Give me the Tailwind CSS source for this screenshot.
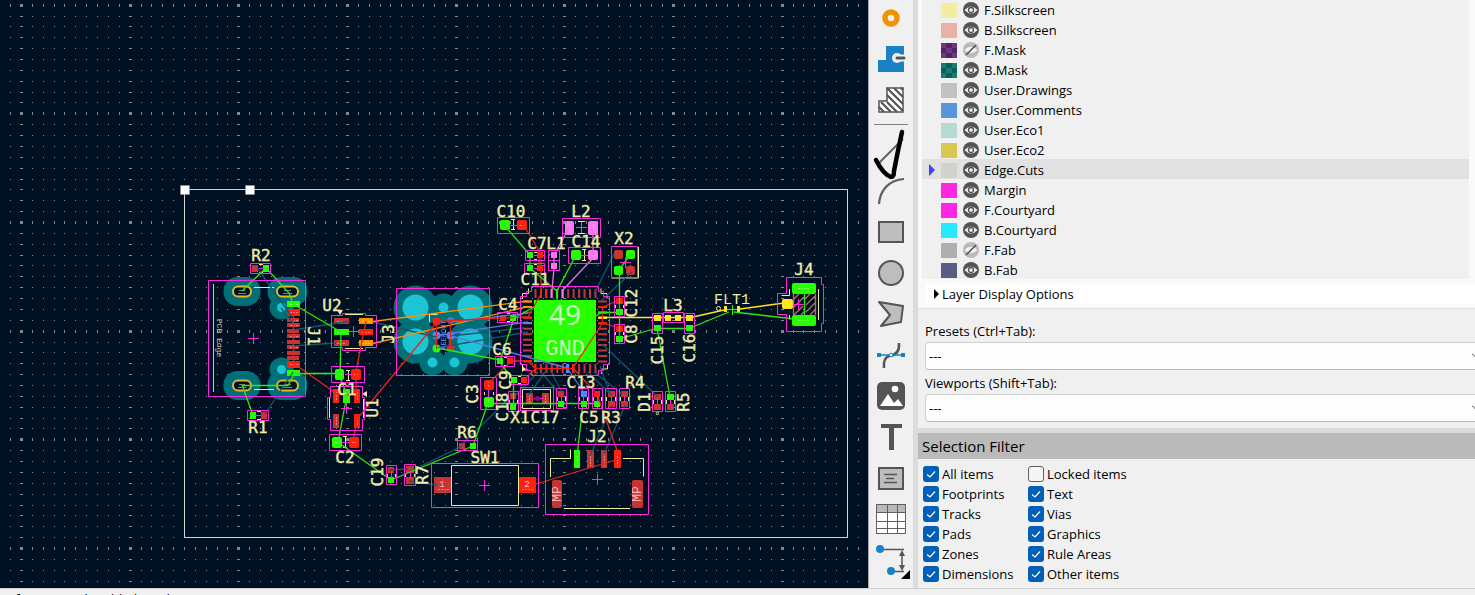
<!DOCTYPE html>
<html lang="en">
<head>
<meta charset="utf-8">
<title>PCB Editor</title>
<script src="https://cdn.jsdelivr.net/npm/@tailwindcss/browser@4"></script>
</head>
<body class="flex h-screen flex-col overflow-hidden bg-[#f0f0f0] font-['Open_Sans','Noto_Sans',sans-serif] text-[13px] leading-5 text-black">
<main class="flex min-h-0 flex-1">

<!-- Board canvas -->
<section aria-label="Board canvas" class="min-w-0 flex-1 overflow-hidden border-r border-[#a8a8a8] bg-[#001023]">
<svg width="1400" height="1000" class="block max-w-none" fill="none" font-family="'DejaVu Sans Mono',monospace">
  <path id="grid" fill="#858889" shape-rendering="crispEdges"/>
  <path stroke="#d0d4d2" d="M184.500 189.500h663v348h-663z"/>

  <!-- Copper clearance halos -->
  <g fill="#007078">
    <rect x="223.500" y="277" width="37" height="29" rx="14"/><rect x="267.500" y="277" width="40" height="29" rx="14"/>
    <rect x="223.500" y="371" width="37" height="29" rx="14"/><rect x="267.500" y="371" width="40" height="29" rx="14"/>
    <circle cx="281.500" cy="307.500" r="12"/><circle cx="281.500" cy="369.500" r="12"/>
    <circle cx="415.500" cy="307.500" r="22"/><circle cx="470.500" cy="307.500" r="22"/><circle cx="415.500" cy="341.500" r="22"/><circle cx="470.500" cy="341.500" r="22"/>
    <circle cx="443.500" cy="307.500" r="14"/><circle cx="432.500" cy="362.500" r="13"/><circle cx="454.500" cy="362.500" r="13"/>
  </g>
  <g fill="#1cc5d6">
    <circle cx="281.500" cy="307.500" r="4.500"/><circle cx="281.500" cy="369.500" r="4.500"/>
    <circle cx="415.500" cy="307.500" r="13"/><circle cx="470.500" cy="307.500" r="13"/><circle cx="415.500" cy="341.500" r="13"/><circle cx="470.500" cy="341.500" r="13"/>
    <circle cx="443.500" cy="307.500" r="5"/><circle cx="432.500" cy="362.500" r="5"/><circle cx="454.500" cy="362.500" r="5"/>
  </g>
  <g fill="#001023" stroke="#e8b52a" stroke-width="2">
    <rect x="233" y="286.500" width="18" height="10" rx="5"/><rect x="277" y="286.500" width="21" height="10" rx="5"/>
    <rect x="233" y="380.500" width="18" height="10" rx="5"/><rect x="277" y="380.500" width="21" height="10" rx="5"/>
  </g>
  <path stroke="#77808a" stroke-width="1" d="M239 290.500h6M238 293.500h8M284 290.500h7M283 293.500h9M239 384.500h6M238 387.500h8M284 384.500h7M283 387.500h9"/>

  <!-- Pads -->
  <g fill="#c83434">
    <path d="M287 318h12v4h-12zM287 323h13v4h-13zM287 329h12v4h-12zM287 334h13v4h-13zM287 340h13v4h-13zM287 345h12v4h-12zM287 351h13v4h-13zM287 356h12v4h-12z"/>
    <path d="M252 265h6v7h-6zM261 412h6v7h-6zM334 318h15v6h-15zM334 340h15v6h-15zM333 414h6v14h-6zM388 467h6v6h-6zM406 466h8v7h-8zM406 477h8v7h-8z"/>
    <path d="M510 393h6v6h-6zM526 393h7v11h-7zM542 393h7v11h-7zM558 391h6v6h-6zM608 391h7v6h-7zM608 401h7v6h-7zM621 391h7v6h-7zM621 401h7v6h-7zM654 394h7v6h-7zM654 404h7v6h-7zM667 404h7v6h-7zM459 443h6v6h-6z"/>
    <rect x="614" y="250" width="9" height="9" rx="2"/><rect x="626" y="266" width="9" height="9" rx="2"/>
    <rect x="434" y="477" width="17" height="16"/><path d="M587 450h7v18h-7zM601 450h6v18h-6z"/>
    <rect x="552" y="480" width="10" height="28" rx="2"/><rect x="632" y="480" width="11" height="28" rx="2"/>
    <circle cx="450.500" cy="348" r="4"/>
  </g>
  <g stroke="#c83434" stroke-width="9" stroke-dasharray="2 3.450">
    <path d="M527.500 300.500v62M602.500 300.500v62M534.500 293.500h62M534.500 368.500h62"/>
  </g>
  <g fill="#26ff00">
    <path d="M287 301h13v6h-13zM287 370h13v6h-13zM263 265h6v7h-6zM250 412h6v7h-6zM334 329h15v6h-15zM343 389h7v14h-7zM388 477h6v6h-6z"/>
    <rect x="335" y="369" width="9" height="11" rx="2"/><rect x="332" y="437" width="10" height="11" rx="2"/><rect x="500" y="220" width="10" height="10" rx="2"/><rect x="571" y="250" width="10" height="10" rx="2"/><rect x="626" y="250" width="9" height="9" rx="2"/><rect x="614" y="266" width="9" height="9" rx="2"/><rect x="484" y="397" width="10" height="10" rx="2"/>
    <path d="M527 252h6v6h-6zM527 265h6v6h-6zM616 309h7v6h-7zM616 336h7v6h-7zM510 315h6v6h-6zM497 358h6v6h-6zM511 377h6v6h-6zM510 404h6v6h-6zM558 401h6v6h-6zM581 401h6v6h-6zM594 401h6v6h-6zM667 394h7v6h-7zM654 325h7v6h-7zM686 325h7v6h-7zM470 443h6v6h-6zM574 450h6v18h-6z"/>
    <rect x="534" y="300" width="62" height="62"/><rect x="792" y="283" width="24" height="11" rx="2"/><rect x="792" y="315" width="24" height="11" rx="2"/>
    <circle cx="436.500" cy="348.500" r="4"/><path d="M598 311.500h9v2h-9zM556 289h2v9h-2z"/>
  </g>
  <g fill="#ff2010">
    <path d="M287 309h13v7h-13zM287 361h13v7h-13zM359 329h14v6h-14zM333 389h6v14h-6zM354 389h6v14h-6zM354 414h6v14h-6z"/>
    <rect x="351" y="369" width="10" height="11" rx="2"/><rect x="349" y="437" width="10" height="11" rx="2"/><rect x="517" y="220" width="10" height="10" rx="2"/><rect x="484" y="380" width="10" height="10" rx="2"/>
    <path d="M537 252h6v6h-6zM537 265h6v6h-6zM616 298h7v6h-7zM616 326h7v6h-7zM500 315h6v6h-6zM507 358h6v6h-6zM521 377h6v6h-6zM594 391h6v6h-6zM519 477h17v16h-17zM614 450h7v18h-7z"/>
    <circle cx="436.500" cy="321.500" r="4"/>
    <path d="M540 289h2v9h-2zM545 289h2v9h-2zM523 316.500h9v2h-9zM523 360h9v2h-9zM598 306h9v2h-9zM598 322.500h9v2h-9zM534 364h2v9h-2zM572 364h2v9h-2z"/>
  </g>
  <g fill="#ff78f0">
    <rect x="565" y="221" width="9" height="14" rx="2"/><rect x="588" y="221" width="10" height="14" rx="2"/><rect x="588" y="250" width="10" height="10" rx="2"/>
    <path d="M551 252h6v6h-6zM551 263h6v6h-6zM550.500 289h2v9h-2zM561.500 289h2v9h-2z"/>
  </g>
  <g fill="#5c84ff"><circle cx="450.500" cy="320.500" r="3.500" opacity=".7"/><circle cx="436.500" cy="335.500" r="4"/><circle cx="450.500" cy="335.500" r="4"/><path d="M581 391h6v6h-6zM566 364h3v9h-3zM523 322h9v2h-9z"/></g>
  <g fill="#ff9000"><path d="M359 318h14v6h-14zM359 340h14v6h-14zM523 300.500h9v2h-9zM523 306h9v2h-9z"/></g>
  <g fill="#ffe61e"><path d="M654 315h7v6h-7zM665 315h6v6h-6zM675 315h6v6h-6zM686 315h7v6h-7zM724 306h3v6h-3zM737 306h3v6h-3zM598 316.500h9v2.500h-9z"/><rect x="782" y="299" width="11" height="10" rx="2"/></g>
  <path stroke="#b8705c" stroke-width="1.300" d="M793.500 294v21M815.500 294v21M794 299l5-5M794 307l10-10M794 315l9-9M801 315l4-4M805 299l5-5M806 305l9-9M806 312l9-9M810 315l5-5"/>

  <!-- Pad net markings -->
  <path stroke="#ffffff" stroke-opacity=".4" stroke-dasharray="2 1" d="M337 321.500h9M362 321.500h9M337 332.500h9M362 332.500h9M337 343.500h9M362 343.500h9M290 304.500h8M290 312.500h8M290 320.500h8M290 325.500h8M290 336.500h8M290 347.500h8M290 364.500h8M290 373.500h8M336.500 392v9M346.500 392v9M357.500 392v9M336.500 417v9M357.500 417v9M503 225.500h5M520 225.500h5M574 255.500h5M591 255.500h5M569.500 224v9M593.500 224v9M577.500 453v13M590.500 453v13M604.500 453v13M617.500 453v13M438 489.500h11M522 489.500h11M798 288.500h12M798 320.500h12M488.500 382v6M488.500 399v6M529.500 395v8M545.500 395v8M338 374.500h4M354 374.500h4M335 442.500h4M352 442.500h4"/>

  <!-- Silkscreen outlines -->
  <path stroke="#f0eca0" d="M254 287.500h20M254 389.500h20M345 314.500h18M345 348.500h18M329.500 398v20M363.500 399v19M346 370.500h4M346 380.500h4M348.500 371v9M343 436.500h4M343 447.500h4M345.500 437v10M511 219.500h4M511 229.500h4M513.500 220v10M578 221.500h7M578 233.500h7M582 249.500h4M582 260.500h4M584.500 250v10M638.500 247v31h-27M429.500 322v-7.500h8M259 264.500h4M259 272.500h4M257 411.500h4M257 419.500h4M534 252.500h3M534 259.500h3M534 264.500h3M534 272.500h3M615.500 305v3M623.500 305v3M615.500 332v3M623.500 332v3M507 313.500h3M507 321.500h3M504 357.500h3M504 365.500h3M518 376.500h3M518 383.500h3M387.500 474v3M395.500 474v3M405.500 474v3M414.500 474v3M484.500 392v3M493.500 392v3M509.500 400v3M517.500 400v3M557.500 397v4M565.500 397v4M579.500 397v4M587.500 397v4M593.500 397v4M601.500 397v4M606.500 397v4M615.500 397v4M620.500 397v4M628.500 397v4M653.500 400v4M661.500 400v4M666.500 400v4M674.500 400v4M522.500 389.500h28v19h-28zM451.500 465.500h67v40h-67zM550.500 477v-18.500h20v-9M623 458.500h20.500v18M564 508.500h66M818.500 289v31M789.500 289v6.500h-8M789.500 315v4.500M522.500 299v-5.500h6v-5M601 288.500v5h6v5M522.500 364v6h6M607.500 364v5h-6v5"/>
  <path fill="#f0eca0" d="M337 310h6l-3 5zM367 391v6l-5-3zM522 366v6l4-3z"/>
  <circle cx="718.500" cy="308.500" r="2" stroke="#f0eca0"/><circle cx="657.500" cy="413.500" r="1.200" stroke="#f0eca0"/>
  <path stroke="#c8c8c8" d="M213.500 284v108"/>

  <!-- Ratsnest -->
  <g stroke-width="1.300">
  <g stroke="#14576b">
    <path d="M258 269l34 48M281 308l12 15M293 330l57-9M293 346l43-3M293 372l-28 42M408 469l-19 1M511 397l-49 47M462 446l-53 26M409 481l28 4M614 254l-20 40M632 272l-31 29M602 344l56 53M594 372l28 22M588 372l24 24M545 372l-17 24M541 372l17 20M538 372l-22 23M550 370l12 22M612 405l-22 51M625 405l-21 49M373 322l63 15M450 336l74-8M600 366l10 28M436 348l92-16"/>
  </g>
  <path stroke="#1cc5d6" d="M460 346l23-4"/>
  <path stroke="#ff9000" d="M373 321.500L528 301M373 343.500L528 306.500"/>
  <path stroke="#557be8" d="M437 335.500l91-13.500M451 336l116 32M567 368l18 26M451 322l77-9M550 254l-1 2"/>
  <path stroke="#ea70dc" d="M554 268l-2 22M569 228l-15 27M593 228v27M593 258l-31 33M554 255v11"/>
  <path stroke="#ffe61e" d="M602 317.500h52M657 317.500h32M693 317l31-7M740 309l44-6"/>
  <g stroke="#e82414">
    <path d="M293.500 313v50M293 363l44 31M366 321l-10 50v20M337 394.500h21M357 420l-4 20M357 419l80-97M437 321.500l70-4M505 318l23-1M523 224l18 30v37M539 255v12M619 300l-16 7M619 328l-16-5M602.500 307v17M602 324l-29 44M534 368.500h38M510 361h18l8 8M524 380l11-11M488 384l22-22M573 368l24 26M597 394l22 62M536 484l83-25M528 317l13-23M436.500 322v26M450.500 321v26"/>
  </g>
  <g stroke="#2ce810">
    <path d="M242 291l24-23M266 268l23 25 4 11M293 304l48 28M341 332l-1 42M293 373.500h47M242 385.500h46l6-11M242 385l11 30M339 375l8 20M347 395l-9 47M339 443l52 37M391 480l82-34M473 446l15-43M488 403.500h109M513.500 380v27M513 380l-14-19M500 361l14-43M514 318l20-11M437 348l63 12M504 225l26 30v13M530 268l28 24M576 255l-19 36v12M619.500 270v70M630 255l-11 15M619 312.500h-17M596 316l6-4M619 339l38-11M657 328.500h32M690 328l39-16M734 312l60 7M657 328l13 69M583 404l-6 52M561.500 299v20M804.500 290v30"/>
  </g>
  </g>
  <path stroke="#26ff00" d="M340.500 352v20M313 373.500h26M732.500 305v10M727 309.500h10"/>

  <!-- Courtyards and anchors -->
  <path stroke="#ff26e2" d="M208.500 280.500h97v116h-97zM250.500 263.500h20v10h-20zM247.500 410.500h21v10h-21zM331.500 315.500h11v-2h23v2h11v32h-11v3h-23v-3h-11zM331.500 366.500h33v16h-33zM330.500 386.500h32v11h2v22h-2v11h-32v-11h-3v-22h3zM329.500 434.500h32v16h-32zM386.500 465.500h10v19h-10zM404.500 464.500h11v21h-11zM396.500 288.500h93v87h-93zM497.500 217.500h32v16h-32zM562.500 218.500h38v19h-38zM525.500 250.500h19v10h-19zM524.500 263.500h20v10h-20zM548.500 250.500h11v20h-11zM548.500 260.500h11M568.500 247.500h32v16h-32zM611.500 246.500h26v31h-26zM614.500 296.500h10v20h-10zM614.500 324.500h10v19h-10zM497.500 312.500h20v10h-20zM495.500 356.500h19v10h-19zM509.500 375.500h19v9h-19zM531.500 286.500h67v5h5v5h6v68h-6v6h-5v5h-67v-5h-5v-6h-6v-68h6v-5h5zM480.500 377.500h16v32h-16zM508.500 391.500h10v20h-10zM520.500 387.500h33v23h-33zM556.500 388.500h10v20h-10zM578.500 388.500h10v20h-10zM592.500 388.500h10v20h-10zM605.500 388.500h11v20h-11zM619.500 388.500h10v20h-10zM652.500 391.500h10v20h-10zM665.500 391.500h10v20h-10zM652.500 313.500h10v20h-10zM663.500 312.500h20v10h-20zM684.500 313.500h10v20h-10zM457.500 440.500h20v10h-20zM431.500 463.500h107v44h-107zM545.500 444.500h103v70h-103zM786.500 277.500h35v7h2v39h-2v8h-35v-17h-9v-21h9z"/>
  <path stroke="#ff26e2" d="M248 338.500h11M253.500 333v11M348 331.500h11M353.500 326v11M341 408.500h11M346.500 403v11M479 485.500h11M484.500 480v11M592 479.500h11M597.500 474v11M620 262.500h11M625.500 257v11M793 304.500h11M798.500 299v11M259 268.500h5M255 415.500h6M345 374.500h7M342 442.500h7M509 225.500h8M581 255.500h7M534 255.500h3M534 268.500h3M534 398.500h9M391.500 472v6M410.500 472v6M488.500 390v7M561.500 396v6M583.500 396v6M597.500 396v6M611.500 396v6M624.500 396v6M657.500 399v6M670.500 399v6M619.500 304v6M619.500 331v6"/>
  <path stroke="#b060c0" d="M576 227.500h11M581.500 222v11"/>
  <circle cx="537.500" cy="398.500" r="2.500" fill="#8a0a86"/>

  <!-- Edit handles -->
  <path fill="#fff" stroke="#8b9096" stroke-opacity=".5" d="M180.500 185.500h9v9h-9zM245.500 185.500h9v9h-9z"/>

  <!-- Reference designators -->
  <g fill="#efebaa" stroke="#efebaa" stroke-width=".4" font-size="16" text-anchor="middle">
    <text x="261" y="261">R2</text><text x="258" y="433">R1</text><text x="332" y="311">U2</text><text x="347" y="395">C1</text><text x="345" y="463">C2</text>
    <text x="511" y="217">C10</text><text x="581" y="217">L2</text><text x="537" y="249">C7</text><text x="556" y="249">L1</text><text x="586" y="247">C14</text><text x="624" y="244">X2</text><text x="535" y="285">C11</text><text x="508" y="310">C4</text><text x="502" y="355">C6</text>
    <text x="520" y="423">X1</text><text x="545" y="423">C17</text><text x="589" y="423">C5</text><text x="611" y="423">R3</text><text x="581" y="388">C13</text><text x="635" y="388">R4</text><text x="673" y="311">L3</text><text x="804" y="275">J4</text><text x="467" y="438">R6</text><text x="485" y="463">SW1</text><text x="597" y="442">J2</text>
    <text transform="translate(308 336) rotate(90)">J1</text>
    <text transform="translate(378 408) rotate(-90)">U1</text><text transform="translate(383 472) rotate(-90)">C19</text><text transform="translate(428 475) rotate(-90)">R7</text><text transform="translate(394 334) rotate(-90)">J3</text><text transform="translate(511 380) rotate(-90)">C9</text><text transform="translate(508 407) rotate(-90)">C18</text><text transform="translate(637 303) rotate(-90)">C12</text><text transform="translate(637 334) rotate(-90)">C8</text><text transform="translate(478 394) rotate(-90)">C3</text><text transform="translate(650 402) rotate(-90)">D1</text><text transform="translate(689 402) rotate(-90)">R5</text><text transform="translate(663 350) rotate(-90)">C15</text><text transform="translate(695 348) rotate(-90)">C16</text>
  </g>
  <g font-family="'Liberation Mono',monospace" text-anchor="middle">
    <text x="732" y="304" font-size="15" fill="#efebaa">FLT1</text>
    <text x="565" y="325" font-size="28" fill="#c9fbc0" font-family="'Noto Sans',sans-serif">49</text><text x="565" y="355" font-size="22" fill="#c9fbc0">GND</text>
    <text x="442" y="487" font-size="9" fill="#f0b8b8">1</text><text x="527" y="487" font-size="9" fill="#ffd0d0">2</text>
    <text transform="translate(561 494) rotate(-90)" font-size="13" fill="#f0b8b8">MP</text><text transform="translate(641 494) rotate(-90)" font-size="13" fill="#f0b8b8">MP</text>
    <text transform="translate(446 335) rotate(-90)" font-size="7" fill="#5a94ec">KEEPOUT</text>
    <text transform="translate(217 338) rotate(90)" font-size="8" fill="#d8d8d8">PCB Edge</text>
  </g>
</svg>
</section>

<!-- Drawing tools -->
<nav aria-label="Drawing tools" class="w-11 shrink-0 overflow-hidden bg-[#f0f0f0]">
  <div class="-mt-[3px] flex flex-col items-center">
    <button aria-label="Place via" class="flex h-[41px] w-full items-center justify-center"><svg width="34" height="34" fill="none"><circle cx="17" cy="17" r="6" stroke="#f29100" stroke-width="5.500"/></svg></button>
    <button aria-label="Draw filled zone" class="flex h-[41px] w-full items-center justify-center"><svg width="34" height="34" fill="none"><path fill="#1a81c4" d="M12 4h18v26H4V18h8z"/><circle cx="23" cy="16" r="5" fill="#f0f0f0"/><path fill="#f0f0f0" d="M23 12.500h7v7h-7z"/><path stroke="#545454" stroke-width="3" stroke-linecap="round" d="M23 16h7"/></svg></button>
    <button aria-label="Draw rule area" class="flex h-[41px] w-full items-center justify-center"><svg width="34" height="34" fill="none"><path fill="#fff" stroke="#545454" stroke-width="1.500" d="M13 5h16v24H5V18h8z"/><path stroke="#545454" stroke-width="2.200" d="M13 5l16 16M20 5l9 9M13 12l16 16M13 19l10 10M7 19l10 10M5 24l5 5M27 5l2 2"/></svg></button>
    <div class="flex h-[9px] items-center"><hr class="w-[34px] border-t border-[#808080]"></div>
    <button aria-label="Draw line" class="flex h-[41px] w-full items-center justify-center"><svg width="34" height="34" class="overflow-visible" fill="none"><path stroke="#606060" stroke-width="2" d="M5 30L29 6"/><path stroke="#000" stroke-width="4.500" stroke-linecap="round" stroke-linejoin="round" d="M2 27Q9 41 17 44Q20 44 20 38Q24 17 28 -1"/></svg></button>
    <button aria-label="Draw arc" class="flex h-[41px] w-full items-center justify-center"><svg width="34" height="34" fill="none"><path stroke="#606060" stroke-width="2.200" d="M5 30C6 16 15 6 30 5"/></svg></button>
    <button aria-label="Draw rectangle" class="flex h-[41px] w-full items-center justify-center"><svg width="34" height="34"><rect x="5" y="7" width="24" height="20" fill="#bdbdbd" stroke="#545454" stroke-width="2"/></svg></button>
    <button aria-label="Draw circle" class="flex h-[41px] w-full items-center justify-center"><svg width="34" height="34"><circle cx="17" cy="17" r="12" fill="#bdbdbd" stroke="#545454" stroke-width="2"/></svg></button>
    <button aria-label="Draw polygon" class="flex h-[41px] w-full items-center justify-center"><svg width="34" height="34"><path fill="#bdbdbd" stroke="#545454" stroke-width="2" stroke-linejoin="round" d="M5 5l24 4-2 16-20 4 9-11z"/></svg></button>
    <button aria-label="Draw bezier curve" class="flex h-[41px] w-full items-center justify-center"><svg width="34" height="34" fill="none"><path stroke="#545454" stroke-width="2.500" d="M10 30Q9 20 15 18Q26 17 25 5"/><path stroke="#1a81c4" stroke-width="1.500" d="M5 17h26"/><path fill="#1a81c4" d="M3 15h4v4h-4zM27 15h4v4h-4z"/><circle cx="17" cy="17" r="1.800" fill="#fff" stroke="#1a81c4"/></svg></button>
    <button aria-label="Place image" class="flex h-[41px] w-full items-center justify-center"><svg width="34" height="34"><rect x="3" y="3" width="28" height="28" rx="5" fill="#545454"/><circle cx="21" cy="10" r="3.300" fill="#fff"/><path fill="#fff" d="M6 27l8-12 6 9 4-4 5 7z"/></svg></button>
    <button aria-label="Add text" class="flex h-[41px] w-full items-center justify-center"><svg width="34" height="34"><path fill="#545454" d="M7 4h21v4h-8v22h-5V8H7z"/></svg></button>
    <button aria-label="Add text box" class="flex h-[41px] w-full items-center justify-center"><svg width="34" height="34"><rect x="5" y="7" width="24" height="21" fill="#bdbdbd" stroke="#545454" stroke-width="2"/><path stroke="#545454" stroke-width="1.500" d="M10 13.500h13M12 17.500h8M10 21.500h13"/></svg></button>
    <button aria-label="Add table" class="flex h-[41px] w-full items-center justify-center"><svg width="34" height="34" fill="none"><path fill="#fff" d="M2 2h30v30H2z"/><path fill="#b8b8b8" d="M2 2h30v8H2z"/><path stroke="#606060" d="M2.500 2v30M31.500 2v30M13.500 2v30M23.500 2v30M2 2.500h30M2 10.500h30M2 19.500h30M2 26.500h30M2 31.500h30"/></svg></button>
    <button aria-label="Add dimension" class="flex h-[41px] w-full items-center justify-center"><svg width="34" height="34" class="overflow-visible" fill="none"><path stroke="#545454" stroke-width="1.500" d="M8 6.500h22M20 28.500h10M28 9v17"/><path fill="#545454" d="M28 7l3 6h-6zM28 28l3-6h-6z"/><circle cx="6" cy="6" r="4" fill="#1a81c4"/><circle cx="17" cy="28" r="4" fill="#1a81c4"/><path fill="#000" d="M36 27v9h-9z"/></svg></button>
  </div>
</nav>

<div class="w-[5px] shrink-0 bg-[#dcdcdc]"></div>

<!-- Appearance panel -->
<aside aria-label="Appearance" class="w-[557px] shrink-0 overflow-hidden">
  <svg class="hidden">
    <symbol id="eye" viewBox="0 0 16 16"><circle cx="8" cy="8" r="8" fill="#545454"/><path fill="#f2f2f2" d="M1.500 8Q8 .8 14.500 8Q8 15.200 1.500 8z"/><circle cx="8" cy="8" r="2.500" fill="#f2f2f2" stroke="#545454" stroke-width="1.300"/></symbol>
    <symbol id="eye-off" viewBox="0 0 16 16"><circle cx="8" cy="8" r="8" fill="#bababa"/><path fill="#f2f2f2" d="M1.500 8Q8 1.500 14.500 8Q8 14.500 1.500 8z"/><path stroke="#545454" stroke-width="1.600" stroke-linecap="round" d="M3.500 12.500l9-9"/></symbol>
  </svg>
  <div class="bg-[#fafafa] pl-1">
    <ul class="-mt-px mr-1.5 bg-[#f0f0f0]">
      <li class="flex h-5 items-center pt-0.5 pl-[19px]"><span class="mr-1.5 h-[15px] w-4 bg-[#f2eda1]"></span><button aria-label="Toggle F.Silkscreen" class="mr-[5px]"><svg class="size-4"><use href="#eye"/></svg></button>F.Silkscreen</li>
      <li class="flex h-5 items-center pt-0.5 pl-[19px]"><span class="mr-1.5 h-[15px] w-4 bg-[#e8b2a7]"></span><button aria-label="Toggle B.Silkscreen" class="mr-[5px]"><svg class="size-4"><use href="#eye"/></svg></button>B.Silkscreen</li>
      <li class="flex h-5 items-center pt-0.5 pl-[19px]"><svg class="mr-1.5 h-[15px] w-4"><path fill="#6b3a7d" d="M0 0h16v15H0z"/><path fill="#55226a" d="M5 0h6v5H5zM0 5h5v5H0zM11 5h5v5h-5zM5 10h6v5H5z"/></svg><button aria-label="Toggle F.Mask" class="mr-[5px]"><svg class="size-4"><use href="#eye-off"/></svg></button>F.Mask</li>
      <li class="flex h-5 items-center pt-0.5 pl-[19px]"><svg class="mr-1.5 h-[15px] w-4"><path fill="#1c7a70" d="M0 0h16v15H0z"/><path fill="#02655b" d="M5 0h6v5H5zM0 5h5v5H0zM11 5h5v5h-5zM5 10h6v5H5z"/></svg><button aria-label="Toggle B.Mask" class="mr-[5px]"><svg class="size-4"><use href="#eye"/></svg></button>B.Mask</li>
      <li class="flex h-5 items-center pt-0.5 pl-[19px]"><span class="mr-1.5 h-[15px] w-4 bg-[#c2c2c2]"></span><button aria-label="Toggle User.Drawings" class="mr-[5px]"><svg class="size-4"><use href="#eye"/></svg></button>User.Drawings</li>
      <li class="flex h-5 items-center pt-0.5 pl-[19px]"><span class="mr-1.5 h-[15px] w-4 bg-[#5994dc]"></span><button aria-label="Toggle User.Comments" class="mr-[5px]"><svg class="size-4"><use href="#eye"/></svg></button>User.Comments</li>
      <li class="flex h-5 items-center pt-0.5 pl-[19px]"><span class="mr-1.5 h-[15px] w-4 bg-[#b4dbd2]"></span><button aria-label="Toggle User.Eco1" class="mr-[5px]"><svg class="size-4"><use href="#eye"/></svg></button>User.Eco1</li>
      <li class="flex h-5 items-center pt-0.5 pl-[19px]"><span class="mr-1.5 h-[15px] w-4 bg-[#d8c852]"></span><button aria-label="Toggle User.Eco2" class="mr-[5px]"><svg class="size-4"><use href="#eye"/></svg></button>User.Eco2</li>
      <li aria-current="true" class="flex h-5 items-center bg-[#e1e1e1] pt-0.5 pl-[7px]"><svg class="mr-1.5 h-3 w-1.5"><path fill="#4040ff" d="M0 0l6 6-6 6z"/></svg><span class="mr-1.5 h-[15px] w-4 bg-[#d0d2cd]"></span><button aria-label="Toggle Edge.Cuts" class="mr-[5px]"><svg class="size-4"><use href="#eye"/></svg></button>Edge.Cuts</li>
      <li class="flex h-5 items-center pt-0.5 pl-[19px]"><span class="mr-1.5 h-[15px] w-4 bg-[#ff26e2]"></span><button aria-label="Toggle Margin" class="mr-[5px]"><svg class="size-4"><use href="#eye"/></svg></button>Margin</li>
      <li class="flex h-5 items-center pt-0.5 pl-[19px]"><span class="mr-1.5 h-[15px] w-4 bg-[#ff26e2]"></span><button aria-label="Toggle F.Courtyard" class="mr-[5px]"><svg class="size-4"><use href="#eye"/></svg></button>F.Courtyard</li>
      <li class="flex h-5 items-center pt-0.5 pl-[19px]"><span class="mr-1.5 h-[15px] w-4 bg-[#26e9ff]"></span><button aria-label="Toggle B.Courtyard" class="mr-[5px]"><svg class="size-4"><use href="#eye"/></svg></button>B.Courtyard</li>
      <li class="flex h-5 items-center pt-0.5 pl-[19px]"><span class="mr-1.5 h-[15px] w-4 bg-[#afafaf]"></span><button aria-label="Toggle F.Fab" class="mr-[5px]"><svg class="size-4"><use href="#eye-off"/></svg></button>F.Fab</li>
      <li class="flex h-5 items-center pt-0.5 pl-[19px]"><span class="mr-1.5 h-[15px] w-4 bg-[#585d84]"></span><button aria-label="Toggle B.Fab" class="mr-[5px]"><svg class="size-4"><use href="#eye"/></svg></button>B.Fab</li>
    </ul>
  </div>
  <div class="border-b border-[#e0e0e0] bg-[#fafafa] pt-[5px] pb-1 pl-2">
    <button class="flex w-full items-center gap-[3px] bg-white pl-2 text-left"><svg class="h-2.5 w-[5px]"><path d="M0 0l5 5-5 5z"/></svg>Layer Display Options</button>
  </div>
  <div class="flex flex-col pt-3 pb-1.5 pl-[7px]">
    <label for="presets" class="mb-px">Presets (Ctrl+Tab):</label>
    <div class="relative -mr-2">
      <select id="presets" class="block h-7 w-full appearance-none rounded-sm border border-[#cfcfcf] border-b-[#b8b8b8] bg-[#fdfdfd] px-[3px] text-[13px]"><option>---</option></select>
      <svg class="pointer-events-none absolute top-2.5 right-[3px] h-2 w-2" fill="none"><path stroke="#404040" d="M0 1.500l4 4 4-4"/></svg>
    </div>
    <label for="viewports" class="mt-[3px] mb-px">Viewports (Shift+Tab):</label>
    <div class="relative -mr-2">
      <select id="viewports" class="block h-7 w-full appearance-none rounded-sm border border-[#cfcfcf] border-b-[#b8b8b8] bg-[#fdfdfd] px-[3px] text-[13px]"><option>---</option></select>
      <svg class="pointer-events-none absolute top-2.5 right-[3px] h-2 w-2" fill="none"><path stroke="#404040" d="M0 1.500l4 4 4-4"/></svg>
    </div>
  </div>
  <h2 class="h-[31px] border-t-[5px] border-[#dcdcdc] bg-[#bababa] pl-1 text-[15px] leading-[26px]">Selection Filter</h2>
  <form class="grid w-fit grid-cols-[105px_auto] pt-[5px] pl-[5px]">
    <label class="flex h-5 items-center gap-[3px]"><input type="checkbox" checked class="size-4 appearance-none rounded-[3px] bg-[#005fb8]"><svg class="-ml-[19px] size-4" fill="none"><path stroke="#fff" stroke-width="1.200" d="M4 8.500l3 2.500 5-5.500"/></svg>All items</label>
    <label class="flex h-5 items-center gap-[3px]"><input type="checkbox" class="size-4 appearance-none rounded-[3px] border border-[#606060] bg-[#f5f5f5]">Locked items</label>
    <label class="flex h-5 items-center gap-[3px]"><input type="checkbox" checked class="size-4 appearance-none rounded-[3px] bg-[#005fb8]"><svg class="-ml-[19px] size-4" fill="none"><path stroke="#fff" stroke-width="1.200" d="M4 8.500l3 2.500 5-5.500"/></svg>Footprints</label>
    <label class="flex h-5 items-center gap-[3px]"><input type="checkbox" checked class="size-4 appearance-none rounded-[3px] bg-[#005fb8]"><svg class="-ml-[19px] size-4" fill="none"><path stroke="#fff" stroke-width="1.200" d="M4 8.500l3 2.500 5-5.500"/></svg>Text</label>
    <label class="flex h-5 items-center gap-[3px]"><input type="checkbox" checked class="size-4 appearance-none rounded-[3px] bg-[#005fb8]"><svg class="-ml-[19px] size-4" fill="none"><path stroke="#fff" stroke-width="1.200" d="M4 8.500l3 2.500 5-5.500"/></svg>Tracks</label>
    <label class="flex h-5 items-center gap-[3px]"><input type="checkbox" checked class="size-4 appearance-none rounded-[3px] bg-[#005fb8]"><svg class="-ml-[19px] size-4" fill="none"><path stroke="#fff" stroke-width="1.200" d="M4 8.500l3 2.500 5-5.500"/></svg>Vias</label>
    <label class="flex h-5 items-center gap-[3px]"><input type="checkbox" checked class="size-4 appearance-none rounded-[3px] bg-[#005fb8]"><svg class="-ml-[19px] size-4" fill="none"><path stroke="#fff" stroke-width="1.200" d="M4 8.500l3 2.500 5-5.500"/></svg>Pads</label>
    <label class="flex h-5 items-center gap-[3px]"><input type="checkbox" checked class="size-4 appearance-none rounded-[3px] bg-[#005fb8]"><svg class="-ml-[19px] size-4" fill="none"><path stroke="#fff" stroke-width="1.200" d="M4 8.500l3 2.500 5-5.500"/></svg>Graphics</label>
    <label class="flex h-5 items-center gap-[3px]"><input type="checkbox" checked class="size-4 appearance-none rounded-[3px] bg-[#005fb8]"><svg class="-ml-[19px] size-4" fill="none"><path stroke="#fff" stroke-width="1.200" d="M4 8.500l3 2.500 5-5.500"/></svg>Zones</label>
    <label class="flex h-5 items-center gap-[3px]"><input type="checkbox" checked class="size-4 appearance-none rounded-[3px] bg-[#005fb8]"><svg class="-ml-[19px] size-4" fill="none"><path stroke="#fff" stroke-width="1.200" d="M4 8.500l3 2.500 5-5.500"/></svg>Rule Areas</label>
    <label class="flex h-5 items-center gap-[3px]"><input type="checkbox" checked class="size-4 appearance-none rounded-[3px] bg-[#005fb8]"><svg class="-ml-[19px] size-4" fill="none"><path stroke="#fff" stroke-width="1.200" d="M4 8.500l3 2.500 5-5.500"/></svg>Dimensions</label>
    <label class="flex h-5 items-center gap-[3px]"><input type="checkbox" checked class="size-4 appearance-none rounded-[3px] bg-[#005fb8]"><svg class="-ml-[19px] size-4" fill="none"><path stroke="#fff" stroke-width="1.200" d="M4 8.500l3 2.500 5-5.500"/></svg>Other items</label>
  </form>
</aside>
</main>

<footer class="h-[7px] shrink-0 overflow-hidden border-t border-[#d0d0d0] bg-[#f0f0f0] leading-5">Reference and Width: board</footer>

<script>
  // Grid: a dot every 10.867px, with every tenth row and column emphasised.
  const step = 10.867;
  let d = '';
  for (let i = -2; i < 127; i++) {
    const major = i % 10 === 0, x = Math.round(21 + i * step), w = major ? 3 : 1;
    for (let j = -50; j < 40; j++) {
      const y = Math.round(548 + j * step), h = j % 10 === 0 ? 3 : 1;
      d += `M${x - (w >> 1)} ${y - (h >> 1)}h${w}v${h}h-${w}z`;
    }
  }
  document.getElementById('grid').setAttribute('d', d);
</script>
</body>
</html>
